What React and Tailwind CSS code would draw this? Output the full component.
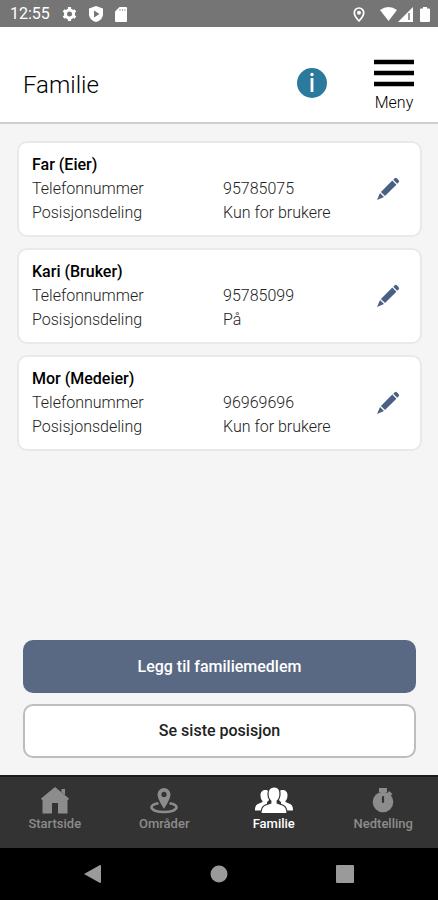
const members = [
  { name: 'Far (Eier)', phone: '95785075', sharing: 'Kun for brukere' },
  { name: 'Kari (Bruker)', phone: '95785099', sharing: 'På' },
  { name: 'Mor (Medeier)', phone: '96969696', sharing: 'Kun for brukere' }
]

const tabs = [
  { label: 'Startside', Icon: HomeIcon },
  { label: 'Områder', Icon: AreaIcon },
  { label: 'Familie', Icon: FamilyIcon, active: true },
  { label: 'Nedtelling', Icon: TimerIcon }
]

function HomeIcon() {
  return (
    <svg width="28" height="27" viewBox="0 0 28 27" fill="currentColor" aria-hidden="true">
      <path d="M14 0 28 11.5 27 13H26.5V26.5H17V16H11V26.5H1.500V13H1L0 11.5Z" />
      <path d="M20.5 2H24V8L20.5 5Z" />
    </svg>
  )
}

function AreaIcon() {
  return (
    <svg width="28" height="27" viewBox="0 0 28 27" fill="currentColor" aria-hidden="true">
      <path d="M14 1a6.5 6.5 0 0 0-6.5 6.5C7.5 12 14 22 14 22s6.5-10 6.5-14.5A6.5 6.5 0 0 0 14 1Zm0 3.800a2.600 2.600 0 1 1 0 5.200 2.600 2.600 0 0 1 0-5.200Z" />
      <path d="M8.500 16.200C4.500 16.800 1.500 18.200 1.500 20.300c0 2.700 5.500 4.700 12.500 4.700s12.500-2 12.500-4.700c0-2.100-3-3.500-7-4.100" fill="none" stroke="currentColor" strokeWidth="2.600" />
    </svg>
  )
}

function FamilyIcon() {
  return (
    <svg width="38" height="27" viewBox="0 0 38 27" fill="currentColor" aria-hidden="true">
      <path d="M10.500 3c3 0 4.500 2.200 4.500 5.500 0 3-1 5.500-3 6.500v2L7 20v3.500H0c0-4 1-6 4-7l3.500-1.500V14C6 12.500 5.500 10.500 5.500 8c0-3 2-5 5-5Z" />
      <path d="M27.500 3c-3 0-4.500 2.200-4.500 5.500 0 3 1 5.500 3 6.500v2l5 3v3.500h7c0-4-1-6-4-7l-3.500-1.500V14c1.500-1.500 2-3.500 2-6 0-3-2-5-5-5Z" />
      <path d="M19 0c4 0 6 2.500 6 6.500 0 3-1 6-2.800 7.500v2l5.300 2c3.500 1.300 4.500 3.500 4.500 8.500H6c0-5 1-7.200 4.500-8.500l5.300-2v-2C14 12.500 13 9.500 13 6.500 13 2.500 15 0 19 0Z" stroke="#333333" strokeWidth="1.200" />
    </svg>
  )
}

function TimerIcon() {
  return (
    <svg width="22" height="27" viewBox="0 0 22 27" fill="currentColor" aria-hidden="true">
      <path d="M7 1h8v4H7z" />
      <path d="m17 4 3.500 3-2 2L15.500 6Z" />
      <circle cx="11" cy="15" r="10.300" />
      <path d="M11 10v5" stroke="#333333" strokeWidth="2.200" strokeLinecap="round" />
    </svg>
  )
}

function PencilIcon() {
  return (
    <svg width="24" height="24" viewBox="0 0 24 24" fill="#4a6083" aria-hidden="true">
      <path d="M16.300 3.600 20.400 7.700 9 19.100 4.900 15Z" />
      <path d="M17.300 2.800 18.800 1.300Q19.800.3 20.800 1.300L22.700 3.200Q23.600 4.200 22.700 5.200L21.200 6.700Z" />
      <path d="M4 16 8 20 1 23Z" />
    </svg>
  )
}

function StatusBar() {
  return (
    <div className="flex h-[27px] items-center justify-between bg-[#757575] pt-px pr-2 pl-[10px] text-white">
      <div className="flex items-center gap-3">
        <span className="text-base leading-5">12:55</span>
        <svg width="15" height="16" viewBox="0 0 15 16" aria-label="Innstillinger">
          <circle cx="7.500" cy="8" r="4" fill="none" stroke="white" strokeWidth="3" />
          <path d="M7.500 1V4M7.500 12V15M1.500 4.500 4 6M11 10l2.500 1.500M1.500 11.500 4 10M11 6l2.500-1.500" stroke="white" strokeWidth="3.200" />
        </svg>
        <svg width="14" height="16" viewBox="0 0 14 16" aria-label="Beskyttelse">
          <path d="M7 0 14 2.500V8c0 4-3 7-7 8-4-1-7-4-7-8V2.500Z" fill="white" />
          <path d="M5 4.500 10.500 8 5 11.500Z" fill="#757575" />
        </svg>
        <svg width="12" height="15" viewBox="0 0 12 15" aria-label="Minnekort">
          <path d="M4.500 0H11q1 0 1 1v13q0 1-1 1H1q-1 0-1-1V4.500Z" fill="white" />
          <path d="M5 2V4M7.500 2V4M10 2V4" stroke="#a5a5a5" strokeWidth="1" />
        </svg>
      </div>
      <div className="flex items-center">
        <svg className="mr-[15px]" width="12" height="15" viewBox="0 0 12 15" fill="none" stroke="white" aria-label="Posisjon">
          <path d="M6 1A4.700 4.700 0 0 0 1.300 5.700C1.300 9 6 14 6 14S10.700 9 10.700 5.700A4.700 4.700 0 0 0 6 1Z" strokeWidth="1.700" />
          <circle cx="6" cy="5.700" r="2" fill="white" stroke="none" />
        </svg>
        <svg width="17" height="14" viewBox="0 0 17 14" fill="white" aria-label="Wi-Fi">
          <path d="M0 3Q8.500-3 17 3L8.500 14Z" />
        </svg>
        <svg className="ml-px" width="15" height="15" viewBox="0 0 15 15" aria-label="Mobilnett">
          <path d="M15 0V15H0Z" fill="white" />
          <path d="M11 6V13" stroke="#757575" strokeWidth="1.500" />
        </svg>
        <svg className="ml-[7px]" width="10" height="15" viewBox="0 0 10 15" fill="white" aria-label="Batteri">
          <path d="M3 0H7V1.500H9q1 0 1 1V14q0 1-1 1H1q-1 0-1-1V2.500q0-1 1-1H3Z" />
        </svg>
      </div>
    </div>
  )
}

function MemberCard({ member }) {
  return (
    <article className="flex items-center rounded-[10px] border-2 border-[#e9e9e9] bg-white py-[10px] pr-5 pl-[13px]">
      <div className="flex-1">
        <h2 className="font-medium text-black">{member.name}</h2>
        <dl className="grid grid-cols-[191px_1fr] font-light text-[#222222]">
          <dt>Telefonnummer</dt>
          <dd>{member.phone}</dd>
          <dt>Posisjonsdeling</dt>
          <dd>{member.sharing}</dd>
        </dl>
      </div>
      <button type="button" aria-label={`Rediger ${member.name}`}>
        <PencilIcon />
      </button>
    </article>
  )
}

export default function App() {
  return (
    <div className="flex min-h-screen flex-col bg-[#f5f5f5] font-['Roboto',sans-serif] text-base leading-6">
      <StatusBar />

      {/* Header */}
      <header className="flex h-[97px] items-center border-b-2 border-[#cfcfcf] bg-white pt-4 pr-6 pl-[23px]">
        <h1 className="flex-1 pt-1 text-2xl font-light text-black">Familie</h1>
        <button type="button" aria-label="Informasjon" className="mr-[47px]">
          <svg width="30" height="30" viewBox="0 0 30 30" aria-hidden="true">
            <circle cx="15" cy="15" r="15" fill="#2b7a9e" />
            <circle cx="15" cy="6.500" r="1.700" fill="white" />
            <path d="M15 10V24" stroke="white" strokeWidth="2.800" />
          </svg>
        </button>
        <button type="button" className="flex flex-col items-center gap-1 pt-2 font-light text-black">
          <svg width="40" height="28" viewBox="0 0 40 28" aria-hidden="true">
            <path d="M0 3H40M0 14H40M0 25H40" stroke="black" strokeWidth="4.500" />
          </svg>
          <span>Meny</span>
        </button>
      </header>

      <main className="flex flex-1 flex-col pt-[17px] pr-4 pb-[17px] pl-[17px]">
        <div className="flex flex-col gap-[11px]">
          {members.map((member) => (
            <MemberCard key={member.name} member={member} />
          ))}
        </div>

        <div className="mt-auto flex flex-col gap-[11px] px-[6px] pt-6 font-medium">
          <button type="button" className="h-[53px] rounded-[10px] bg-[#596984] text-white">
            Legg til familiemedlem
          </button>
          <button type="button" className="h-[54px] rounded-[10px] border-2 border-[#bdbdbd] bg-white text-[#222222]">
            Se siste posisjon
          </button>
        </div>
      </main>

      {/* Tabs */}
      <nav className="grid h-[73px] grid-cols-4 border-t-2 border-[#1c1c1c] bg-[#333333] pt-[10px] text-[13px] font-medium">
        {tabs.map(({ label, Icon, active }) => (
          <a
            key={label}
            href="#"
            aria-current={active ? 'page' : undefined}
            className={`flex flex-col items-center leading-5 ${active ? 'text-white' : 'text-[#8c8c8c]'}`}
          >
            <Icon />
            {label}
          </a>
        ))}
      </nav>

      {/* System navigation */}
      <div className="flex h-[52px] items-center justify-center gap-[108px] bg-black text-[#9a9a9a]">
        <button type="button" aria-label="Tilbake">
          <svg width="18" height="18" viewBox="0 0 18 18" fill="currentColor">
            <path d="M0 9 16 0Q17 0 17 1V17Q17 18 16 18Z" />
          </svg>
        </button>
        <button type="button" aria-label="Hjem">
          <svg width="18" height="18" viewBox="0 0 18 18" fill="currentColor">
            <circle cx="9" cy="9" r="8.500" />
          </svg>
        </button>
        <button type="button" aria-label="Oversikt">
          <svg width="18" height="18" viewBox="0 0 18 18" fill="currentColor">
            <rect width="18" height="18" rx="1" />
          </svg>
        </button>
      </div>
    </div>
  )
}
